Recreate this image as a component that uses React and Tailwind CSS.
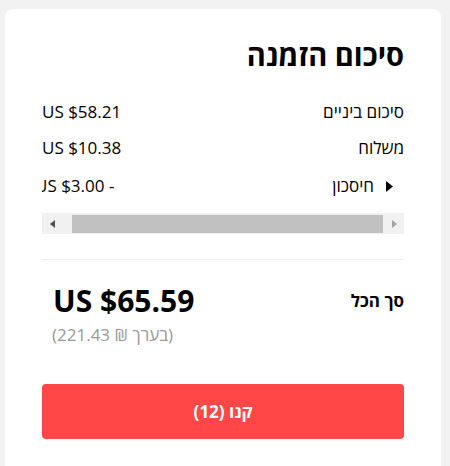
export default function App() {
  return (
    <div className="min-h-[466px] bg-[#f2f2f2] pt-[9px] pl-[5px] overflow-hidden" style={{ fontFamily: '"Open Sans", "Noto Sans", sans-serif' }}>
      <div dir="rtl" className="w-[436px] h-[470px] bg-white rounded-[8px] pt-[28px] px-[37px] text-black">
        <h1 className="h-[36px] leading-[36px] text-[29px] font-bold">סיכום הזמנה</h1>
        <div className="mt-[27px] flex justify-between items-center h-[24px] leading-[24px] text-[17px]">
          <span>סיכום ביניים</span>
          <span dir="ltr">US $58.21</span>
        </div>
        <div className="mt-[12px] flex justify-between items-center h-[24px] leading-[24px] text-[17px]">
          <span>משלוח</span>
          <span dir="ltr">US $10.38</span>
        </div>
        <div className="mt-[14px] overflow-hidden">
          <div className="w-[369px] h-[39px] flex justify-between items-start text-[17px] leading-[24px]">
            <span className="flex items-center">
              <svg width="8" height="11" viewBox="0 0 8 11" className="mr-[10px] ml-[12px]">
                <polygon points="0,0 7,5.5 0,11" fill="#000" />
              </svg>
              <span>חיסכון</span>
            </span>
            <span>- US $3.00</span>
          </div>
        </div>
        <div dir="ltr" className="h-[21px] bg-[#f1f1f1] flex items-stretch">
          <div className="w-[20px] flex items-center justify-center">
            <svg width="5" height="8" viewBox="0 0 5 8">
              <polygon points="5,0 0,4 5,8" fill="#505050" />
            </svg>
          </div>
          <div className="flex-1 pl-[10px] pr-[1px] flex items-center">
            <div className="w-full h-[18px] bg-[#c1c1c1]"></div>
          </div>
          <div className="w-[20px] flex items-center justify-center">
            <svg width="5" height="8" viewBox="0 0 5 8">
              <polygon points="0,0 5,4 0,8" fill="#a3a3a3" />
            </svg>
          </div>
        </div>
        <div className="mt-[25px] border-t border-[#eeeeee]"></div>
        <div className="mt-[25px] flex justify-between items-center h-[32px]">
          <span className="text-[17px] font-bold">סך הכל</span>
          <span dir="ltr" className="text-[30px] font-bold leading-[32px] ml-[11px]">US $65.59</span>
        </div>
        <div className="mt-[6px] h-[24px] leading-[24px] text-[17px] text-[#999999] text-left pl-[10px]">
          <span>(בערך ₪ 221.43)</span>
        </div>
        <button className="mt-[37px] w-full h-[55px] rounded-[4px] bg-[#ff4747] text-white text-[17px] font-bold">
          קנו (12)
        </button>
      </div>
    </div>
  );
}
